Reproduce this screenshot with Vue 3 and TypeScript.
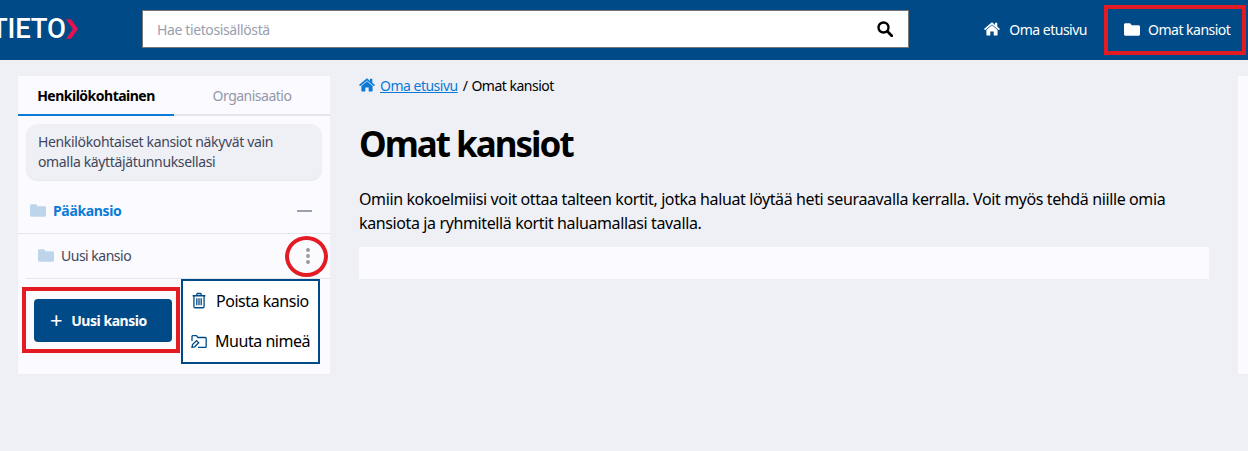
<script setup lang="ts">
const folderPath = 'M1.5 0h4.6l1.6 1.9h6.8c.8 0 1.5.7 1.5 1.5V11c0 .8-.7 1.5-1.5 1.5H1.5C.7 12.5 0 11.8 0 11V1.5C0 .7.7 0 1.5 0z'
const homePath = 'M8 3.200 2.400 7.900v5c0 .3.2.5.5.5h3.400V9.600h3.400v3.800h3.400c.3 0 .5-.2.5-.5v-5L8 3.200zm7.800 3.600-2.500-2.100V1c0-.2-.1-.3-.3-.3h-1.700c-.2 0-.3.1-.3.3v1.900L8.700.8C8.300.4 7.700.4 7.300.8L.2 6.800c-.1.1-.1.3 0 .4l.7.9c.1.1.3.1.4 0L8 2.500l6.700 5.600c.1.1.3.1.4 0l.7-.9c.1-.1.1-.3 0-.4z'
</script>

<template>
  <div class="page">
    <header class="topbar">
      <div class="logo"><span class="logo-text">TIETO</span>
        <svg class="chevron" width="12" height="20" viewBox="0 0 13 21"><path d="M0 0h5.500L13 10.500 5.500 21H0l7.500-10.500z" fill="#e5124f"/></svg>
      </div>
      <div class="search">
        <span class="placeholder">Hae tietosisällöstä</span>
        <svg class="search-icon" width="16" height="16" viewBox="0 0 16 16"><circle cx="6.500" cy="6.500" r="5" fill="none" stroke="#000" stroke-width="2.400"/><path d="M10.300 10.300 14.700 14.700" stroke="#000" stroke-width="2.800" stroke-linecap="round"/></svg>
      </div>
      <nav class="nav">
        <a class="nav-item home"><svg width="16" height="14" viewBox="0 0 16 14"><path :d="homePath" fill="#fff"/></svg>Oma etusivu</a>
        <a class="nav-item folders"><svg width="16" height="13" viewBox="0 0 16 12.500"><path :d="folderPath" fill="#fff"/></svg>Omat kansiot</a>
      </nav>
    </header>

    <div class="body">
      <aside class="sidebar">
        <div class="tabs">
          <div class="tab active">Henkilökohtainen</div>
          <div class="tab">Organisaatio</div>
        </div>
        <div class="note">Henkilökohtaiset kansiot näkyvät vain omalla käyttäjätunnuksellasi</div>
        <div class="root-row">
          <svg width="16" height="13" viewBox="0 0 16 12.500"><path :d="folderPath" fill="#bdd5ea"/></svg>
          <span class="root-name">Pääkansio</span>
          <span class="minus"></span>
        </div>
        <div class="child-row">
          <svg width="16" height="13" viewBox="0 0 16 12.500"><path :d="folderPath" fill="#bdd5ea"/></svg>
          <span class="child-name">Uusi kansio</span>
          <span class="dots"><i></i><i></i><i></i></span>
          <span class="ring"></span>
        </div>
        <div class="actions">
          <div class="new-wrap">
            <button class="new-btn"><span class="plus">+</span>Uusi kansio</button>
          </div>
          <div class="menu">
            <div class="menu-item">
              <svg class="trash" width="14" height="17" viewBox="0 0 16 18" fill="none" stroke="#004b87" stroke-width="1.500"><path d="M.7 3.600h14.600M2.200 3.600v12.300c0 .8.600 1.400 1.400 1.400h8.800c.8 0 1.400-.6 1.400-1.400V3.600M5 3.400 6 1h4l1 2.400M5.500 6.500v8M8 6.500v8M10.500 6.500v8"/></svg>
              Poista kansio
            </div>
            <div class="menu-item">
              <svg width="16" height="13" viewBox="0 0 16 13" fill="none" stroke="#004b87" stroke-width="1.300"><path d="M1 6V1.400C1 1 1.300.7 1.700.7h3.700l1.500 1.800h7.400c.5 0 .9.400.9.900v8c0 .5-.4.9-.9.900H7"/><path d="M1 12.300l.5-2.700 4-4 2.200 2.200-4 4z"/></svg>
              Muuta nimeä
            </div>
          </div>
        </div>
      </aside>

      <main class="main">
        <div class="crumbs">
          <svg width="16" height="14" viewBox="0 0 16 14"><path :d="homePath" fill="#0a7ad6"/></svg>
          <a class="crumb-link">Oma etusivu</a>
          <span class="sep">/</span>
          <span>Omat kansiot</span>
        </div>
        <h1>Omat kansiot</h1>
        <p>Omiin kokoelmiisi voit ottaa talteen kortit, jotka haluat löytää heti seuraavalla kerralla. Voit myös tehdä niille omia kansiota ja ryhmitellä kortit haluamallasi tavalla.</p>
        <div class="empty"></div>
      </main>

      <div class="right-panel"></div>
    </div>
  </div>
</template>

<style>
html, body { margin: 0; background: #eff0f5; }
</style>

<style scoped>
.page {
  width: 1248px;
  height: 451px;
  overflow: hidden;
  background: #eff0f5;
  font-family: "Noto Sans", sans-serif;
  color: #000;
}
.topbar {
  height: 60px;
  background: #004b87;
  display: flex;
  align-items: center;
  position: relative;
}
.logo {
  width: 142px;
  margin-left: -9px;
  padding-bottom: 3px;
  display: flex;
  align-items: center;
  flex: none;
  box-sizing: border-box;
}
.logo-text {
  font-family: Roboto, sans-serif;
  font-size: 27.500px;
  line-height: 30px;
  font-weight: 500;
  letter-spacing: -0.2px;
  color: #fff;
}
.chevron { margin-left: 0; }
.search {
  width: 767px;
  height: 38px;
  margin-left: 9px;
  margin-bottom: 2px;
  box-sizing: border-box;
  background: #fff;
  border: 1px solid #777;
  display: flex;
  align-items: center;
  justify-content: space-between;
  padding: 0 15px 0 14px;
  flex: none;
}
.placeholder { font-size: 14px; letter-spacing: -0.38px; color: #9a9eae; }
.search-icon { display: block; }
.nav { display: flex; align-items: center; margin-left: auto; height: 100%; }
.nav-item {
  display: flex;
  align-items: center;
  color: #fff;
  font-size: 14px;
  letter-spacing: -0.5px;
  height: 100%;
  gap: 9px;
  margin-bottom: 2px;
}
.home { margin-right: 17px; }
.folders {
  height: 50px;
  width: 142px;
  box-sizing: border-box;
  border: 4px solid #e31b23;
  padding-left: 16px;
  margin-right: 2px;
  margin-bottom: 1px;
  gap: 8px;
}
.body { display: flex; align-items: flex-start; padding-top: 16px; }
.sidebar {
  width: 312px;
  height: 298px;
  margin-left: 18px;
  background: #fafaff;
  flex: none;
  position: relative;
}
.tabs { display: flex; height: 40px; box-sizing: border-box; }
.tab {
  width: 156px;
  box-sizing: border-box;
  border-bottom: 2px solid #e5e6ec;
  display: flex;
  align-items: center;
  justify-content: center;
  font-size: 14px;
  letter-spacing: -0.5px;
  color: #9498a8;
}
.tab.active { border-bottom-color: #0a7ad6; color: #000; font-weight: 700; }
.note {
  margin: 8px 8px 0;
  height: 56px;
  box-sizing: border-box;
  border-radius: 12px;
  background: #eff0f5;
  box-shadow: 0 1px 1px #e5e6ec;
  padding: 8px 12px;
  font-size: 14px;
  letter-spacing: -0.35px;
  line-height: 20px;
  color: #41465a;
}
.root-row {
  height: 54px;
  display: flex;
  align-items: center;
  border-bottom: 1px solid #e5e6ec;
  padding: 8px 0 0 12px;
  box-sizing: border-box;
  position: relative;
}
.root-row svg { margin-right: 7px; }
.root-name { font-size: 14px; letter-spacing: -0.35px; font-weight: 700; color: #0a7ad6; }
.minus {
  position: absolute;
  right: 18px;
  top: 30px;
  width: 15px;
  height: 2px;
  background: #9aa1ae;
}
.child-row {
  height: 45px;
  margin-left: 8px;
  border-bottom: 1px solid #e5e6ec;
  box-sizing: border-box;
  display: flex;
  align-items: center;
  padding: 0 0 1px 12px;
  position: relative;
}
.child-row svg { margin-right: 7px; }
.child-name { font-size: 14px; letter-spacing: -0.5px; color: #41465a; }
.dots {
  position: absolute;
  right: 20px;
  top: 14px;
  display: flex;
  flex-direction: column;
  gap: 2px;
}
.dots i { display: block; width: 4px; height: 4px; border-radius: 50%; background: #9b9b9b; }
.ring {
  position: absolute;
  right: 2px;
  top: 2px;
  width: 43px;
  height: 41px;
  box-sizing: border-box;
  border: 4px solid #e31b23;
  border-radius: 50%;
}
.actions { display: flex; align-items: flex-start; position: relative; }
.new-wrap {
  margin: 8px 0 0 4px;
  width: 158px;
  height: 66px;
  box-sizing: border-box;
  border: 4px solid #e31b23;
  padding: 8px;
  flex: none;
}
.new-btn {
  width: 138px;
  height: 43px;
  margin: 0;
  border: 0;
  border-radius: 4px;
  background: #004b87;
  color: #fff;
  font-family: inherit;
  font-size: 14px;
  letter-spacing: -0.45px;
  font-weight: 700;
  display: flex;
  align-items: center;
  gap: 9px;
  padding: 0 0 0 16px;
}
.plus { font-size: 22px; font-weight: 400; line-height: 1; margin-top: -3px; }
.menu {
  position: absolute;
  left: 163px;
  top: 0;
  width: 139px;
  height: 85px;
  box-sizing: border-box;
  border: 2px solid #004b87;
  background: #fff;
}
.menu-item {
  height: 40px;
  display: flex;
  align-items: center;
  font-size: 16px;
  letter-spacing: -0.47px;
  padding-left: 8px;
  gap: 8px;
}
.trash { margin: -1px 2px 0 1px; }
.main { width: 850px; margin-left: 29px; flex: none; }
.crumbs { display: flex; align-items: center; height: 20px; font-size: 14px; letter-spacing: -0.5px; margin-top: -1px; }
.crumb-link { color: #0a7ad6; text-decoration: underline; margin-left: 5px; }
.sep { margin: 0 4px 0 5px; }
h1 {
  margin: 29px 0 0;
  font-size: 35px;
  line-height: 40px;
  font-weight: 700;
  letter-spacing: -2px;
}
p {
  margin: 23px 0 0;
  font-size: 16px;
  letter-spacing: -0.385px;
  line-height: 24px;
}
.empty { height: 32px; margin-top: 12px; background: #fafaff; }
.right-panel {
  width: 10px;
  height: 298px;
  margin-left: 29px;
  background: #fafaff;
  flex: none;
}
</style>
